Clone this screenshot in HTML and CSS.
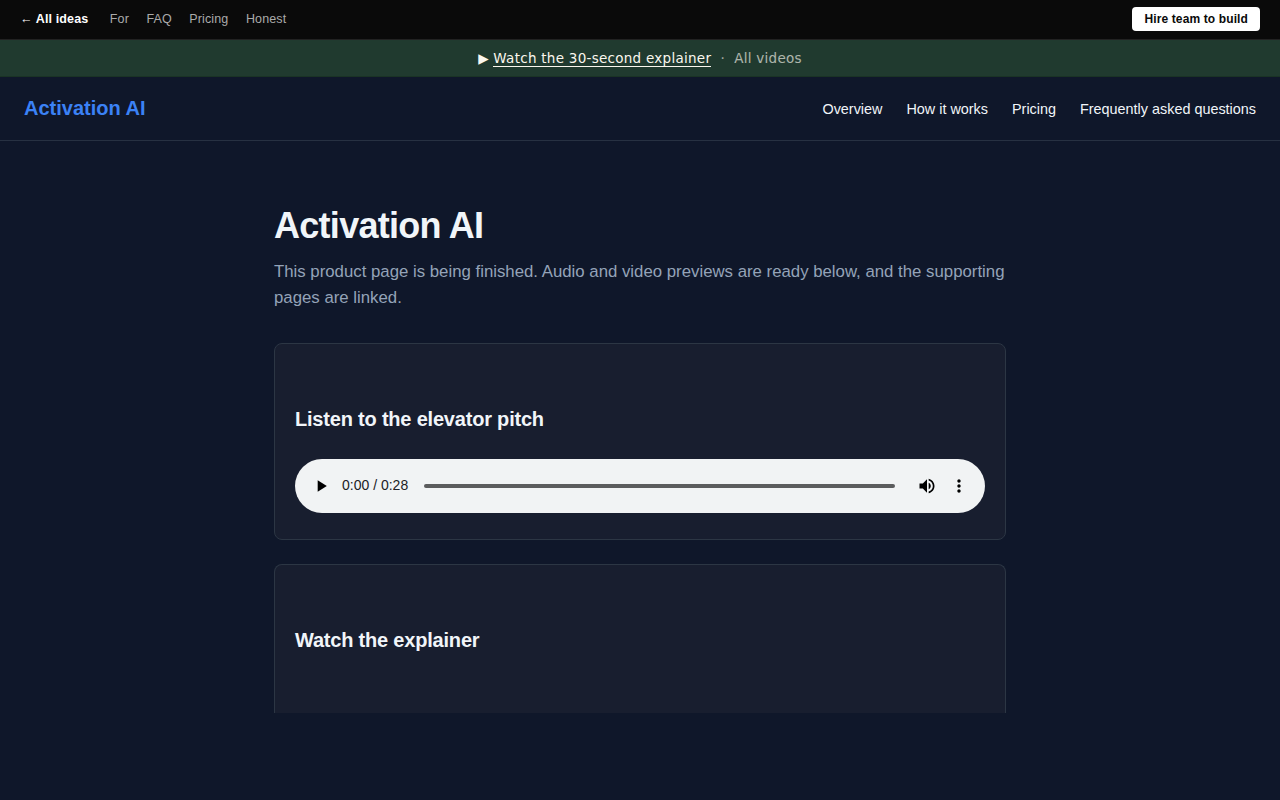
FILE: index.html
```
<!DOCTYPE html>
<html lang="en">
<head>
    <meta charset="UTF-8">
    <meta name="viewport" content="width=device-width, initial-scale=1.0">
    <title>Activation AI</title>
    <link rel="stylesheet" href="styles.css">
</head>
<body>
    <div class="topbar">
        <nav class="topbar-links">
            <a class="back" href="#">← All ideas</a>
            <a href="#">For</a>
            <a href="#">FAQ</a>
            <a href="#">Pricing</a>
            <a href="#">Honest</a>
        </nav>
        <a class="hire" href="#">Hire team to build</a>
    </div>

    <div class="banner">
        <span class="play-mark">▶</span>
        <a class="watch" href="#">Watch the 30-second explainer</a>
        <span class="dot">·</span>
        <a class="all" href="#">All videos</a>
    </div>

    <header class="site-header">
        <a class="logo" href="#">Activation AI</a>
        <nav class="site-nav">
            <a href="#">Overview</a>
            <a href="#">How it works</a>
            <a href="#">Pricing</a>
            <a href="#">Frequently asked questions</a>
        </nav>
    </header>

    <main>
        <h1>Activation AI</h1>
        <p class="lead">This product page is being finished. Audio and video previews are ready below, and the supporting pages are linked.</p>

        <section class="card">
            <h2>Listen to the elevator pitch</h2>
            <div class="player">
                <svg class="icon play" viewBox="0 0 24 24"><path d="M8 5v14l11-7z"/></svg>
                <span class="time">0:00 / 0:28</span>
                <div class="track"></div>
                <svg class="icon volume" viewBox="0 0 24 24"><path d="M3 9v6h4l5 5V4L7 9H3zm13.5 3c0-1.77-1.02-3.29-2.5-4.03v8.05c1.48-.73 2.5-2.25 2.5-4.02zM14 3.23v2.06c2.89.86 5 3.54 5 6.71s-2.11 5.85-5 6.71v2.06c4.01-.91 7-4.49 7-8.77s-2.99-7.86-7-8.77z"/></svg>
                <svg class="icon more" viewBox="0 0 24 24"><path d="M12 8c1.1 0 2-.9 2-2s-.9-2-2-2-2 .9-2 2 .9 2 2 2zm0 2c-1.1 0-2 .9-2 2s.9 2 2 2 2-.9 2-2-.9-2-2-2zm0 6c-1.1 0-2 .9-2 2s.9 2 2 2 2-.9 2-2-.9-2-2-2z"/></svg>
            </div>
        </section>

        <section class="card card-video">
            <h2>Watch the explainer</h2>
        </section>
    </main>
</body>
</html>
```

FILE: styles.css
```
* {
    box-sizing: border-box;
}

body {
    margin: 0;
    height: 800px;
    overflow: hidden;
    background: #0f172a;
    color: #f1f5f9;
    font-family: "Liberation Sans", Arial, sans-serif;
    font-size: 16px;
}

a {
    color: inherit;
    text-decoration: none;
}

/* Top bar */
.topbar {
    display: flex;
    justify-content: space-between;
    align-items: center;
    height: 40px;
    padding: 0 20px 2px;
    background: #0a0a0a;
    border-bottom: 1px solid #222;
    font-size: 12.5px;
    letter-spacing: 0.01em;
}

.topbar-links {
    display: flex;
    gap: 17.5px;
    color: #aaa;
}

.topbar-links .back {
    color: #fff;
    font-weight: bold;
    margin-right: 4px;
}

.hire {
    padding: 5px 12px;
    background: #fff;
    color: #0a0a0a;
    border-radius: 4px;
    font-size: 12px;
    font-weight: bold;
    line-height: 14px;
}

/* Video banner */
.banner {
    display: flex;
    justify-content: center;
    align-items: center;
    height: 37px;
    background: #203a2f;
    border-bottom: 1px solid #1a3325;
    color: #faf7ee;
    font-family: "DejaVu Sans", sans-serif;
    font-size: 13.5px;
    letter-spacing: 0.02em;
}

.banner .watch {
    margin: 1px 0 0 4.5px;
    line-height: 16px;
    border-bottom: 1px solid #faf7ee;
}

.banner .dot {
    margin: 0 9.2px;
    opacity: 0.6;
}

.banner .all {
    opacity: 0.65;
}

/* Header */
.site-header {
    display: flex;
    justify-content: space-between;
    align-items: center;
    height: 64px;
    padding: 0 24px;
    border-bottom: 1px solid #273142;
}

.logo {
    color: #3b82f6;
    font-size: 20px;
    font-weight: bold;
}

.site-nav {
    display: flex;
    gap: 24px;
    font-size: 14.4px;
}

/* Content */
main {
    width: 780px;
    margin: 0 auto;
    padding: 64px 24px 0;
}

h1 {
    margin: 0 0 13px;
    font-size: 36px;
    line-height: 41px;
    letter-spacing: -0.02em;
}

.lead {
    margin: 0 0 32px;
    color: #94a3b8;
    font-size: 16.8px;
    line-height: 26px;
}

.card {
    height: 197px;
    margin-bottom: 24px;
    padding: 64px 20px 0;
    background: #181e2f;
    border: 1px solid #2c3644;
    border-radius: 8px;
}

.card h2 {
    margin: 0 0 28px;
    font-size: 20px;
    line-height: 23px;
    letter-spacing: -0.01em;
}

.card-video {
    height: 149px;
    border-bottom: none;
    border-radius: 8px 8px 0 0;
}

/* Audio player */
.player {
    display: flex;
    align-items: center;
    height: 54px;
    padding: 0 16px;
    background: #f1f3f4;
    border-radius: 27px;
}

.icon {
    flex: none;
    width: 20px;
    height: 20px;
    fill: #000;
}

.time {
    margin: 0 0 2px 11px;
    color: #202124;
    font-size: 14px;
}

.track {
    flex: 1;
    height: 4px;
    margin: 0 22px 0 16px;
    background: #5b5c5d;
    border-radius: 2px;
}

.more {
    margin-left: 12px;
}
```
